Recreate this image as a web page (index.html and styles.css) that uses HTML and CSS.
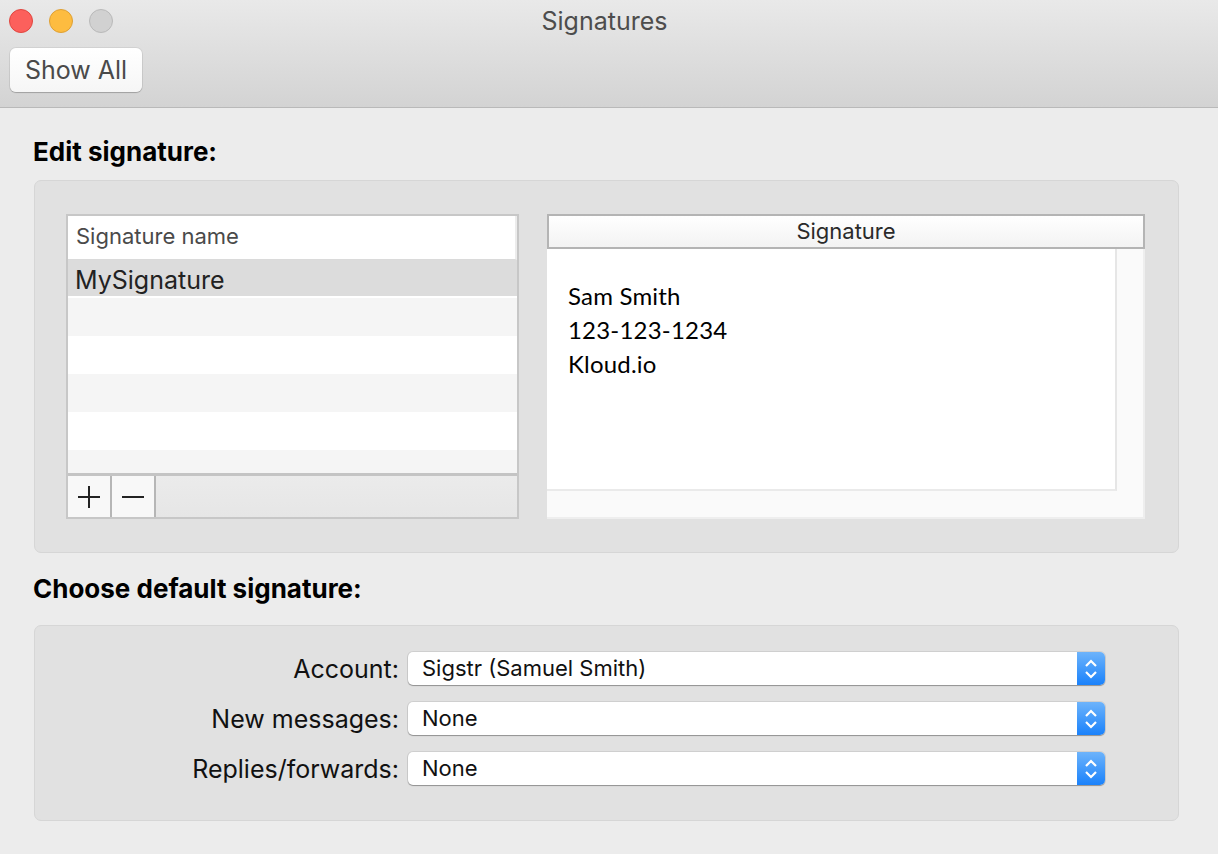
FILE: index.html
```html
<!doctype html>
<html>
<head>
    <title>Signatures</title>
    <meta charset="utf-8" />
    <link rel="stylesheet" href="styles.css">
</head>
<body>
<div class="window">
    <div class="toolbar">
        <div class="titlebar">
            <div class="lights">
                <span class="light close"></span>
                <span class="light minimize"></span>
                <span class="light zoom"></span>
            </div>
            <div class="title">Signatures</div>
        </div>
        <div class="tools">
            <button class="show-all">Show All</button>
        </div>
    </div>

    <div class="content">
        <h2>Edit signature:</h2>
        <div class="group edit">
            <div class="sig-list">
                <div class="list-header">Signature name</div>
                <div class="rows">
                    <div class="row selected">MySignature</div>
                    <div class="row"></div>
                    <div class="row"></div>
                    <div class="row"></div>
                    <div class="row"></div>
                    <div class="row"></div>
                </div>
                <div class="list-buttons">
                    <button class="list-btn">
                        <svg width="24" height="24" viewBox="0 0 24 24"><path d="M12 1v22M1 12h22" stroke="#222" stroke-width="2" fill="none"/></svg>
                    </button>
                    <button class="list-btn">
                        <svg width="24" height="24" viewBox="0 0 24 24"><path d="M1 12h22" stroke="#222" stroke-width="2" fill="none"/></svg>
                    </button>
                </div>
            </div>
            <div class="sig-pane">
                <div class="pane-header">Signature</div>
                <div class="pane-body">
                    <div class="pane-main">
                        <div class="pane-text">
                            <div>Sam Smith</div>
                            <div>123-123-1234</div>
                            <div>Kloud.io</div>
                        </div>
                        <div class="scroll-v"></div>
                    </div>
                    <div class="scroll-h"></div>
                </div>
            </div>
        </div>

        <h2>Choose default signature:</h2>
        <div class="group defaults">
            <label>Account:</label>
            <div class="popup">
                <span>Sigstr (Samuel Smith)</span>
                <span class="stepper"><svg width="16" height="22" viewBox="0 0 16 22"><path d="M3 8l5-5 5 5M3 14l5 5 5-5" stroke="#fff" stroke-width="2.2" fill="none"/></svg></span>
            </div>
            <label>New messages:</label>
            <div class="popup">
                <span>None</span>
                <span class="stepper"><svg width="16" height="22" viewBox="0 0 16 22"><path d="M3 8l5-5 5 5M3 14l5 5 5-5" stroke="#fff" stroke-width="2.2" fill="none"/></svg></span>
            </div>
            <label>Replies/forwards:</label>
            <div class="popup">
                <span>None</span>
                <span class="stepper"><svg width="16" height="22" viewBox="0 0 16 22"><path d="M3 8l5-5 5 5M3 14l5 5 5-5" stroke="#fff" stroke-width="2.2" fill="none"/></svg></span>
            </div>
        </div>
    </div>
</div>
</body>
</html>
```

FILE: styles.css
```css
* { box-sizing: border-box; }

html, body {
    margin: 0;
    padding: 0;
}

body {
    font: 24px/1.2 Inter, "Noto Sans", sans-serif;
    background: #ececec;
    color: #1a1a1a;
    width: 1218px;
    height: 854px;
    overflow: hidden;
}

button {
    font-family: inherit;
    margin: 0;
    padding: 0;
}

/* toolbar */

.toolbar {
    height: 108px;
    background: linear-gradient(#e9e9e9, #d3d3d3);
    border-bottom: 1px solid #b9b9b9;
}

.titlebar {
    display: flex;
    align-items: center;
    height: 41px;
    padding-left: 9px;
}

.lights {
    display: flex;
    gap: 16px;
    width: 350px;
}

.light {
    width: 24px;
    height: 24px;
    border-radius: 50%;
    border: 1px solid;
}

.close { background: #fc605c; border-color: #e0463f; }
.minimize { background: #fdbc40; border-color: #dea034; }
.zoom { background: #d1d1d1; border-color: #b9b9b9; }

.title {
    flex: 1;
    text-align: center;
    margin-left: -350px;
    padding-right: 18px;
    color: #4d4d4d;
    font-size: 25px;
}

.tools {
    padding: 7px 0 0 10px;
}

.show-all {
    width: 132px;
    height: 44px;
    font-size: 25px;
    color: #4a4a4a;
    background: linear-gradient(#ffffff, #f6f6f6);
    border: none;
    border-radius: 6px;
    box-shadow: 0 0 0 1px rgba(0,0,0,0.06), 0 1px 1px rgba(0,0,0,0.2);
}

/* content */

.content {
    padding: 0 40px 0 33px;
}

h2 {
    margin: 0;
    font-size: 26px;
    font-weight: 700;
    color: #000;
    line-height: 28px;
}

.content h2:first-child {
    padding-top: 30px;
    padding-bottom: 44px;
}

.group {
    margin-left: 1px;
    width: 1145px;
    background: #e1e1e1;
    border: 1px solid #d6d6d6;
    border-radius: 7px;
}

.group.edit {
    display: flex;
    gap: 28px;
    padding: 33px 32px 33px 31px;
    margin-top: -30px;
    margin-bottom: 22px;
}

/* signature list */

.sig-list {
    width: 453px;
    height: 305px;
    border: 2px solid #c7c7c7;
    background: #fff;
    display: flex;
    flex-direction: column;
}

.list-header {
    height: 44px;
    padding: 7px 0 0 8px;
    font-size: 22px;
    color: #4a4a4a;
    background: #fff;
    border-right: 2px solid #ececec;
    border-bottom: 1px solid #dadada;
}

.rows {
    flex: 1;
    overflow: hidden;
}

.row {
    height: 38px;
}

.row:nth-child(even) { background: #f5f5f5; }

.row.selected {
    height: 38px;
    background: #dcdcdc;
    border-bottom: 2px solid #fff;
    padding-left: 7px;
    font-size: 25px;
    color: #222;
    line-height: 40px;
}

.list-buttons {
    display: flex;
    height: 44px;
    background: linear-gradient(#ebebeb, #e6e6e6);
    border-top: 3px solid #c4c4c4;
}

.list-btn {
    width: 44px;
    height: 41px;
    background: #f8f8f8;
    border: none;
    border-right: 2px solid #b6b6b6;
    display: flex;
    align-items: center;
    justify-content: center;
}

/* signature editor */

.sig-pane {
    width: 598px;
    height: 305px;
    display: flex;
    flex-direction: column;
    background: #fafafa;
}

.pane-header {
    height: 35px;
    border: 2px solid #b4b4b4;
    background: linear-gradient(#ffffff, #f3f3f3);
    text-align: center;
    font-size: 22px;
    color: #2a2a2a;
    line-height: 30px;
}

.pane-body {
    flex: 1;
    display: flex;
    flex-direction: column;
    border-right: 2px solid #eeeeee;
    border-bottom: 2px solid #eeeeee;
}

.pane-main {
    flex: 1;
    display: flex;
}

.pane-text {
    flex: 1;
    background: #fff;
    border-right: 2px solid #e6e6e6;
    border-bottom: 2px solid #eaeaea;
    padding: 30px 0 0 21px;
    font-family: Lato, "Open Sans", sans-serif;
    font-size: 24px;
    letter-spacing: 0.2px;
    line-height: 34px;
    color: #000;
}

.scroll-v {
    width: 26px;
    background: #fafafa;
}

.scroll-h {
    height: 26px;
    background: #fafafa;
}

/* defaults */

.group.defaults {
    display: grid;
    grid-template-columns: 364px 697px;
    column-gap: 9px;
    row-gap: 17px;
    align-items: center;
    padding: 26px 0 35px 0;
    margin-top: 22px;
}

.defaults label {
    text-align: right;
    font-size: 25px;
    color: #111;
}

.popup {
    height: 33px;
    display: flex;
    align-items: center;
    background: #fff;
    border-radius: 5px;
    box-shadow: 0 0 0 1px rgba(0,0,0,0.08), 0 1px 1px rgba(0,0,0,0.3);
    font-size: 22px;
    color: #111;
    overflow: hidden;
}

.popup span:first-child {
    flex: 1;
    padding-left: 14px;
}

.stepper {
    width: 28px;
    height: 33px;
    display: flex;
    align-items: center;
    justify-content: center;
    background: linear-gradient(#6db3fb, #1a82fb);
}
```
